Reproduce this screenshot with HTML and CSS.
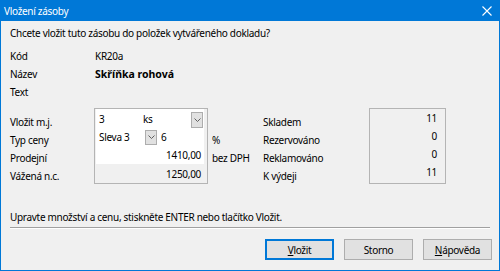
FILE: index.html
```html
<!DOCTYPE html>
<html lang="cs">
<head>
    <meta charset="UTF-8">
    <title>Vložení zásoby</title>
    <link rel="stylesheet" href="styles.css">
</head>
<body>
    <div class="window">
        <div class="titlebar">
            <span class="title">Vložení zásoby</span>
            <svg class="close" width="10" height="10" viewBox="0 0 10 10">
                <path d="M0.5 0.5 L9.5 9.5 M9.5 0.5 L0.5 9.5" stroke="#ffffff" stroke-width="1.1" fill="none"/>
            </svg>
        </div>
        <div class="content">
            <div class="question">Chcete vložit tuto zásobu do položek vytvářeného dokladu?</div>

            <div class="info">
                <div class="info-label">Kód</div><div class="info-value">KR20a</div>
                <div class="info-label">Název</div><div class="info-value name">Skříňka rohová</div>
                <div class="info-label">Text</div><div class="info-value"></div>
            </div>

            <div class="middle">
                <div class="labels">
                    <div>Vložit m.j.</div>
                    <div>Typ ceny</div>
                    <div>Prodejní</div>
                    <div>Vážená n.c.</div>
                </div>
                <div class="entry-box">
                    <div class="entry-row row-qty">
                        <div class="field qty">3</div>
                        <div class="field combo unit">ks<span class="drop"><svg width="7" height="4" viewBox="0 0 7 4"><path d="M0.5 0.5 L3.5 3.5 L6.5 0.5" stroke="#606060" fill="none"/></svg></span></div>
                    </div>
                    <div class="entry-row row-type">
                        <div class="field combo price-type">Sleva 3<span class="drop"><svg width="7" height="4" viewBox="0 0 7 4"><path d="M0.5 0.5 L3.5 3.5 L6.5 0.5" stroke="#606060" fill="none"/></svg></span></div>
                        <div class="field discount">6</div>
                    </div>
                    <div class="entry-row row-price">
                        <div class="field number">1410,00</div>
                    </div>
                    <div class="entry-row row-cost">
                        <div class="field number readonly">1250,00</div>
                    </div>
                </div>
                <div class="units">
                    <div></div>
                    <div>%</div>
                    <div>bez DPH</div>
                </div>
                <div class="stat-labels">
                    <div>Skladem</div>
                    <div>Rezervováno</div>
                    <div>Reklamováno</div>
                    <div>K výdeji</div>
                </div>
                <div class="stat-box">
                    <div>11</div>
                    <div>0</div>
                    <div>0</div>
                    <div>11</div>
                </div>
            </div>

            <div class="hint">Upravte množství a cenu, stiskněte ENTER nebo tlačítko Vložit.</div>
            <div class="separator"></div>

            <div class="buttons">
                <button class="btn default"><u>V</u>ložit</button>
                <button class="btn">Storno</button>
                <button class="btn"><u>N</u>ápověda</button>
            </div>
        </div>
    </div>
</body>
</html>
```

FILE: styles.css
```css
body {
    margin: 0;
    padding: 0;
    background-color: #f0f0f0;
    font-family: "Noto Sans", "Open Sans", sans-serif;
    font-size: 10px;
    letter-spacing: -0.3px;
    color: #000000;
}
.window {
    width: 500px;
    height: 271px;
    box-sizing: border-box;
    border: 1px solid #0078d7;
    border-top: none;
    background-color: #f0f0f0;
    display: flex;
    flex-direction: column;
}
.titlebar {
    height: 21px;
    background-color: #0078d7;
    display: flex;
    align-items: center;
    justify-content: space-between;
    padding: 0 8px 0 4px;
    margin: 0 -1px;
}
.title {
    color: #ffffff;
}
.close {
    display: block;
}
.content {
    padding: 3px 9px 0 9px;
}
.question {
    line-height: 18px;
}
.info {
    margin-top: 5px;
    display: grid;
    grid-template-columns: 85px 1fr;
    grid-auto-rows: 18px;
    line-height: 18px;
}
.info-value.name {
    font-weight: bold;
    font-size: 10.5px;
    letter-spacing: 0;
}
.middle {
    margin-top: 7px;
    display: flex;
    align-items: flex-start;
}
.labels,
.units,
.stat-labels {
    padding-top: 5px;
    line-height: 18px;
}
.labels div,
.units div,
.stat-labels div {
    height: 18px;
}
.labels {
    width: 84px;
}
.entry-box {
    width: 114px;
    height: 76px;
    box-sizing: border-box;
    border: 1px solid #b4b4b4;
    padding: 0 3px 0 1px;
}
.entry-row {
    display: flex;
}
.row-qty { height: 19px; }
.row-type { height: 18px; }
.row-price { height: 18px; }
.row-cost { height: 19px; }
.field {
    background-color: #ffffff;
    height: 100%;
    box-sizing: border-box;
    display: flex;
    align-items: center;
    padding: 0 3px;
}
.qty {
    width: 42px;
}
.unit {
    flex: 1;
    padding-left: 5px;
}
.price-type {
    width: 62px;
}
.discount {
    flex: 1;
    padding-left: 3px;
}
.combo {
    justify-content: space-between;
    padding-right: 1px;
}
.drop {
    width: 12px;
    height: 15px;
    box-sizing: border-box;
    border: 1px solid #adadad;
    background-color: #e1e1e1;
    display: flex;
    align-items: center;
    justify-content: center;
}
.row-qty .drop {
    height: 16px;
    margin-top: 3px;
}
.number {
    flex: 1;
    justify-content: flex-end;
}
.readonly {
    background-color: #f0f0f0;
}
.units {
    width: 51px;
    padding-left: 4px;
}
.stat-labels {
    width: 106px;
}
.stat-box {
    width: 77px;
    height: 76px;
    box-sizing: border-box;
    border: 1px solid #b4b4b4;
    text-align: right;
    padding-right: 8px;
    line-height: 18px;
}
.hint {
    margin-top: 23px;
    line-height: 18px;
}
.separator {
    margin-top: 1px;
    width: 480px;
    height: 0;
    border-top: 1px solid #a0a0a0;
    border-bottom: 1px solid #ffffff;
}
.buttons {
    margin-top: 10px;
    display: flex;
    justify-content: flex-end;
    gap: 10px;
}
.btn {
    width: 69px;
    height: 21px;
    box-sizing: border-box;
    padding: 0;
    font-family: "Noto Sans", "Open Sans", sans-serif;
    font-size: 10px;
    letter-spacing: -0.3px;
    color: #000000;
    background-color: #e1e1e1;
    border: 1px solid #adadad;
    border-radius: 0;
}
.btn.default {
    border: 2px solid #0078d7;
}
.buttons .btn:last-child {
    margin-right: -2px;
}
```
